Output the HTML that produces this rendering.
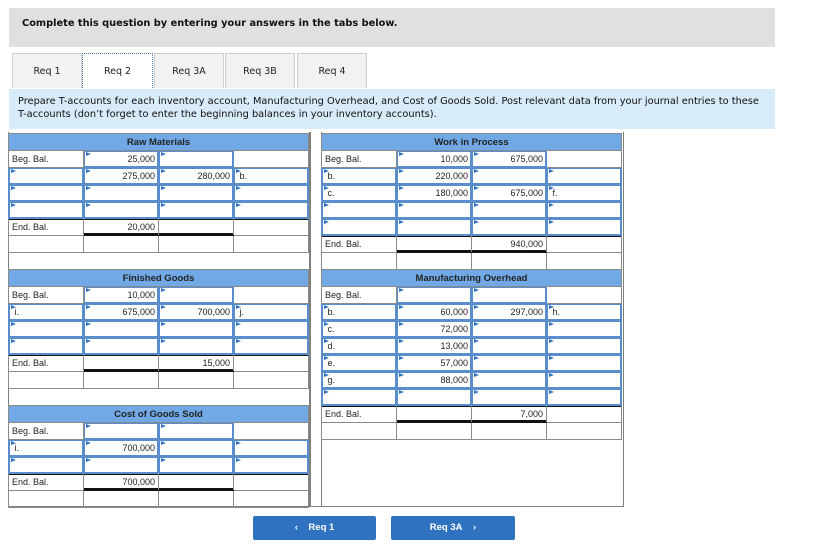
<!DOCTYPE html>
<html><head><meta charset="utf-8"><style>
body{margin:0;width:825px;height:555px;background:#fff;position:relative;overflow:hidden;font-family:"Liberation Sans",Arial,sans-serif}
.top{position:absolute;left:9px;top:8px;width:766px;height:39px;background:#e0e0e0}
.top span{position:absolute;left:13px;top:10px;font:bold 9.8px "DejaVu Sans",Verdana,sans-serif;color:#111}
.tab{position:absolute;top:53px;height:35px;background:#f2f2f2;border:1px solid #cfcfcf;border-bottom:none;box-sizing:border-box;font:9.5px "DejaVu Sans",Verdana,sans-serif;color:#222;text-align:center;line-height:36px}
.tab.on{background:#fff;border:1px dotted #4a7ab8;border-bottom:none;height:37px}
.info{position:absolute;left:9px;top:89px;width:766px;height:40px;background:#d8ebf8;box-sizing:border-box;padding:7px 0 0 9px;font:9.8px/12.5px "DejaVu Sans",Verdana,sans-serif;color:#111;white-space:nowrap}
.box{position:absolute;left:8px;top:132px;width:614px;height:374px;border:1px solid #808080;border-top:none}
.div1{position:absolute;left:309px;top:132px;width:0;height:375px;border-left:2px solid #808080}
.div2{position:absolute;left:321px;top:132px;width:0;height:375px;border-left:1px solid #808080}
table{position:absolute;border-collapse:collapse;table-layout:fixed;width:301px}
td{border:1px solid #8a8a8a;height:16px;padding:0;font-size:9px;color:#222;position:relative;overflow:hidden;white-space:nowrap}
td.h{background:#70a9e5;text-align:center;font-weight:bold;font-size:9.5px;color:#222}
td.n{text-align:right;padding-right:3px}
td.l{padding-left:3px}
td.i{box-shadow:inset 0 0 0 1px #5a8dcc;border-color:#5a8dcc}
td.i::before{content:"";position:absolute;left:2px;top:1px;border-top:2.5px solid transparent;border-bottom:2.5px solid transparent;border-left:5px solid #2f74c8}
tr.e td{box-shadow:inset 0 1px 0 #111;border-top-color:#111}
tr.e td.b{box-shadow:inset 0 1px 0 #111,inset 0 -2px 0 #111;border-bottom-color:#111}
.btn{position:absolute;top:516px;height:24px;background:#2f72c0;color:#fff;font:bold 9.5px "Liberation Sans",Arial,sans-serif;line-height:24px;text-align:center;border-radius:2px}
</style></head><body>
<div class="top"><span>Complete this question by entering your answers in the tabs below.</span></div>
<div class="tab" style="left:12px;width:70px">Req 1</div>
<div class="tab on" style="left:82px;width:71px">Req 2</div>
<div class="tab" style="left:154px;width:70px">Req 3A</div>
<div class="tab" style="left:225px;width:70px">Req 3B</div>
<div class="tab" style="left:297px;width:70px">Req 4</div>
<div class="info">Prepare T-accounts for each inventory account, Manufacturing Overhead, and Cost of Goods Sold. Post relevant data from your journal entries to these<br>T-accounts (don’t forget to enter the beginning balances in your inventory accounts).</div>
<div class="box"></div><div class="div1"></div><div class="div2"></div>

<table style="left:8px;top:133px">
<tr><td class="h" colspan="4">Raw Materials</td></tr>
<tr><td class="l">Beg. Bal.</td><td class="i n">25,000</td><td class="i"></td><td></td></tr>
<tr><td class="i"></td><td class="i n">275,000</td><td class="i n">280,000</td><td class="i l">&nbsp;b.</td></tr>
<tr><td class="i"></td><td class="i"></td><td class="i"></td><td class="i"></td></tr>
<tr><td class="i"></td><td class="i"></td><td class="i"></td><td class="i"></td></tr>
<tr class="e"><td class="l">End. Bal.</td><td class="n b">20,000</td><td class="b"></td><td></td></tr>
<tr><td></td><td></td><td></td><td></td></tr>
</table>

<table style="left:8px;top:269px">
<tr><td class="h" colspan="4">Finished Goods</td></tr>
<tr><td class="l">Beg. Bal.</td><td class="i n">10,000</td><td class="i"></td><td></td></tr>
<tr><td class="i l">&nbsp;i.</td><td class="i n">675,000</td><td class="i n">700,000</td><td class="i l">&nbsp;j.</td></tr>
<tr><td class="i"></td><td class="i"></td><td class="i"></td><td class="i"></td></tr>
<tr><td class="i"></td><td class="i"></td><td class="i"></td><td class="i"></td></tr>
<tr class="e"><td class="l">End. Bal.</td><td class="b"></td><td class="n b">15,000</td><td></td></tr>
<tr><td></td><td></td><td></td><td></td></tr>
</table>

<table style="left:8px;top:405px">
<tr><td class="h" colspan="4">Cost of Goods Sold</td></tr>
<tr><td class="l">Beg. Bal.</td><td class="i"></td><td class="i"></td><td></td></tr>
<tr><td class="i l">&nbsp;i.</td><td class="i n">700,000</td><td class="i"></td><td class="i"></td></tr>
<tr><td class="i"></td><td class="i"></td><td class="i"></td><td class="i"></td></tr>
<tr class="e"><td class="l">End. Bal.</td><td class="n b">700,000</td><td class="b"></td><td></td></tr>
<tr><td></td><td></td><td></td><td></td></tr>
</table>

<table style="left:321px;top:133px">
<tr><td class="h" colspan="4">Work in Process</td></tr>
<tr><td class="l">Beg. Bal.</td><td class="i n">10,000</td><td class="i n">675,000</td><td></td></tr>
<tr><td class="i l">&nbsp;b.</td><td class="i n">220,000</td><td class="i"></td><td class="i"></td></tr>
<tr><td class="i l">&nbsp;c.</td><td class="i n">180,000</td><td class="i n">675,000</td><td class="i l">&nbsp;f.</td></tr>
<tr><td class="i"></td><td class="i"></td><td class="i"></td><td class="i"></td></tr>
<tr><td class="i"></td><td class="i"></td><td class="i"></td><td class="i"></td></tr>
<tr class="e"><td class="l">End. Bal.</td><td class="b"></td><td class="n b">940,000</td><td></td></tr>
<tr><td></td><td></td><td></td><td></td></tr>
</table>

<table style="left:321px;top:269px">
<tr><td class="h" colspan="4">Manufacturing Overhead</td></tr>
<tr><td class="l">Beg. Bal.</td><td class="i"></td><td class="i"></td><td></td></tr>
<tr><td class="i l">&nbsp;b.</td><td class="i n">60,000</td><td class="i n">297,000</td><td class="i l">&nbsp;h.</td></tr>
<tr><td class="i l">&nbsp;c.</td><td class="i n">72,000</td><td class="i"></td><td class="i"></td></tr>
<tr><td class="i l">&nbsp;d.</td><td class="i n">13,000</td><td class="i"></td><td class="i"></td></tr>
<tr><td class="i l">&nbsp;e.</td><td class="i n">57,000</td><td class="i"></td><td class="i"></td></tr>
<tr><td class="i l">&nbsp;g.</td><td class="i n">88,000</td><td class="i"></td><td class="i"></td></tr>
<tr><td class="i"></td><td class="i"></td><td class="i"></td><td class="i"></td></tr>
<tr class="e"><td class="l">End. Bal.</td><td class="b"></td><td class="n b">7,000</td><td></td></tr>
<tr><td></td><td></td><td></td><td></td></tr>
</table>

<div class="btn" style="left:253px;width:123px">&#x2039;&nbsp;&nbsp;&nbsp;&nbsp;Req 1</div>
<div class="btn" style="left:391px;width:124px">Req 3A&nbsp;&nbsp;&nbsp;&nbsp;&#x203A;</div>
</body></html>
